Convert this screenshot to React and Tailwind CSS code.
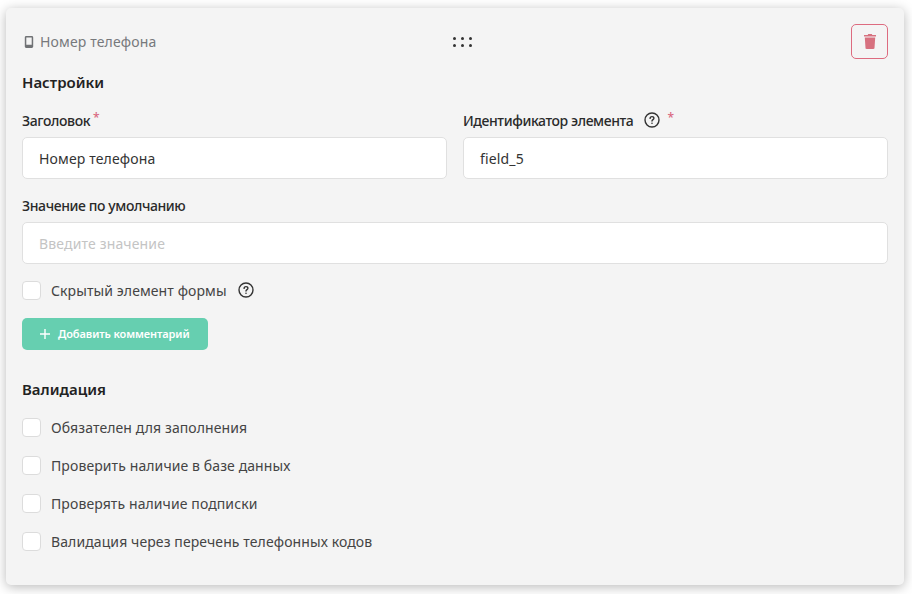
import React from "react";

const font = { fontFamily: '"Noto Sans", "Open Sans", sans-serif' };

const HelpIcon = () => (
  <svg width="16" height="16" viewBox="0 0 16 16" fill="none" className="shrink-0 text-[#333]">
    <circle cx="8" cy="8" r="7" stroke="currentColor" strokeWidth="1.4" />
    <path d="M6.1 6.4c0-1.1.8-1.800 1.900-1.800s1.900.7 1.900 1.600c0 1.400-1.900 1.500-1.900 2.900" stroke="currentColor" strokeWidth="1.4" strokeLinecap="round" />
    <circle cx="8" cy="11.3" r=".8" fill="currentColor" />
  </svg>
);

const Star = () => <span className="mt-[3px] block text-[12px] leading-none text-[#d9677f]">*</span>;

const Check = ({ label, help }) => (
  <label className="flex h-[20px] items-center">
    <span className="h-[19px] w-[19px] shrink-0 rounded-[4px] border border-[#dcdcdc] bg-white" />
    <span className="ml-[10px] text-[14px] tracking-[0.1px] text-[#444]">{label}</span>
    {help && <span className="ml-[11px]"><HelpIcon /></span>}
  </label>
);

const Field = ({ value, placeholder }) => (
  <div className={"flex h-[42px] items-center rounded-[5px] border border-[#e0e0e0] bg-white px-[16px] text-[14px] tracking-[0.15px] " + (placeholder ? "text-[#c4c4c4]" : "text-[#333]")}>
    {value || placeholder}
  </div>
);

export default function App() {
  return (
    <div className="h-[594px] w-[912px] overflow-hidden bg-white pl-[6px] pt-[8px]" style={font}>
      <div className="h-[577px] w-[898px] rounded-[5px] bg-[#f4f4f4] px-[16px] pt-[16px] shadow-[0_2px_12px_rgba(0,0,0,0.28)]">
        <div className="flex h-[35px] items-start">
          <div className="flex h-[35px] w-[431px] items-center text-[14px] tracking-[0.15px] text-[#77797c]">
            <svg width="12" height="14" viewBox="0 0 12 14" className="ml-[1px] mr-[5px] shrink-0">
              <path fillRule="evenodd" fill="#707275" d="M3.2 1h5.6C9.6 1 10.2 1.6 10.2 2.4v9.2c0 .8-.6 1.400-1.400 1.400H3.200c-.8 0-1.400-.6-1.400-1.400V2.400C1.800 1.600 2.400 1 3.200 1zM3.300 2.400v7.300h5.400V2.400z" />
            </svg>
            Номер телефона
          </div>
          <div className="mt-[13px] grid grid-cols-3 gap-x-[5px] gap-y-[4px]">
            {[0, 1, 2, 3, 4, 5].map((i) => (
              <span key={i} className="h-[3px] w-[3px] rounded-full bg-[#333]" />
            ))}
          </div>
          <button className="ml-auto flex h-[35px] w-[37px] items-center justify-center rounded-[5px] border border-[#dd6b7f]">
            <svg width="12" height="15" viewBox="0 0 12 15">
              <path fill="#d7717f" d="M4.200 0h3.600l.5 1H12v1.600H0V1H3.700zM.8 3.600h10.400l-.7 10.500c0 .5-.5.9-1 .9H2.500c-.5 0-1-.4-1-.9z" />
            </svg>
          </button>
        </div>

        <h3 className="mt-[13px] text-[15px] leading-[20px] font-semibold text-[#222]">Настройки</h3>

        <div className="mt-[16px] grid grid-cols-2 gap-x-[16px]">
          <div>
            <div className="flex h-[24px] items-start pt-[1px] text-[14px] font-medium tracking-[-0.4px] text-[#2a2a2a]">
              <span className="mt-[1px]">Заголовок</span>
              <span className="ml-[3px]"><Star /></span>
            </div>
            <div className="mt-[5px]"><Field value="Номер телефона" /></div>
          </div>
          <div>
            <div className="flex h-[24px] items-start pt-[1px] text-[14px] font-medium tracking-[-0.4px] text-[#2a2a2a]">
              <span className="mt-[1px]">Идентификатор элемента</span>
              <span className="ml-[11px] mt-[3px]"><HelpIcon /></span>
              <span className="ml-[7px]"><Star /></span>
            </div>
            <div className="mt-[5px]"><Field value="field_5" /></div>
          </div>
        </div>

        <div className="mt-[17px] text-[14px] leading-[20px] font-medium tracking-[-0.4px] text-[#2a2a2a]">Значение по умолчанию</div>
        <div className="mt-[6px]"><Field placeholder="Введите значение" /></div>

        <div className="mt-[16px]"><Check label="Скрытый элемент формы" help /></div>

        <button className="mt-[18px] flex h-[32px] w-[186px] items-center rounded-[5px] bg-[#66cfb0] pl-[17px] text-[11px] font-semibold tracking-[-0.1px] text-white">
          <svg width="12" height="12" viewBox="0 0 12 12" className="mr-[7px]">
            <path d="M6 1v10M1 6h10" stroke="#fff" strokeWidth="1.400" />
          </svg>
          Добавить комментарий
        </button>

        <h3 className="mt-[29px] text-[15px] leading-[20px] font-semibold text-[#222]">Валидация</h3>

        <div className="mt-[18px] flex flex-col gap-[18px]">
          <Check label="Обязателен для заполнения" />
          <Check label="Проверить наличие в базе данных" />
          <Check label="Проверять наличие подписки" />
          <Check label="Валидация через перечень телефонных кодов" />
        </div>
      </div>
    </div>
  );
}
